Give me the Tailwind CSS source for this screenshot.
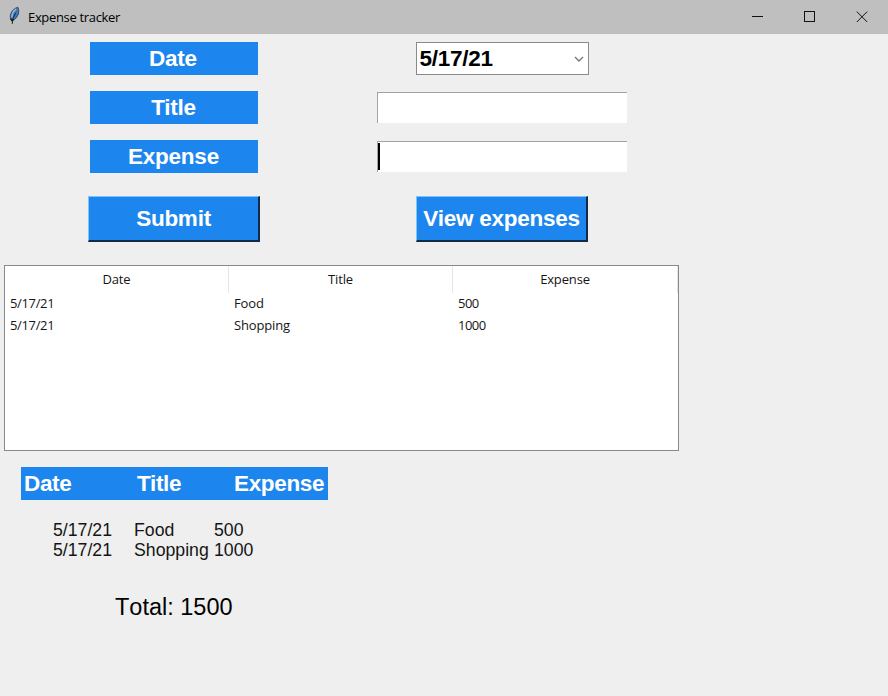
<!DOCTYPE html>
<html lang="en">
<head>
<meta charset="utf-8">
<title>Expense tracker</title>
<script src="https://cdn.jsdelivr.net/npm/@tailwindcss/browser@4"></script>
</head>
<body class="w-[888px] h-[696px] overflow-hidden bg-[#efefef] text-black font-['Liberation_Sans',Arial,sans-serif]">
<header class="flex h-[34px] items-center bg-[#bfbfbf] pl-2">
  <svg class="mb-[2px] h-[20px] w-[13px] shrink-0" viewBox="0 0 13 20">
    <path d="M3.2 14.5C0.8 10.5 3 3.2 9.8 1.2C12.4 6 9.4 12.5 4.8 14.5Z" fill="#3e75b4" stroke="#3c4650" stroke-width="0.9"/>
    <path d="M4 11.5C3.8 8 5.5 5 8.2 3.2" fill="none" stroke="#86bdf0" stroke-width="1.5"/>
    <path d="M7.6 7L5 12.5L4.2 18" fill="none" stroke="#171d24" stroke-width="0.9"/>
    <path d="M2 12.5L4.2 16.3L6.2 13" fill="#222"/>
  </svg>
  <h1 class="mb-px ml-[7px] whitespace-nowrap font-['Open_Sans','Noto_Sans',sans-serif] text-[13px] leading-[18px] tracking-[-0.33px]">Expense tracker</h1>
  <div class="ml-auto flex">
    <svg class="h-[34px] w-[52px]" viewBox="0 0 52 34"><path d="M20 16.5h11" stroke="#111" fill="none"/></svg>
    <svg class="h-[34px] w-[52px]" viewBox="0 0 52 34"><rect x="20.5" y="11.5" width="10" height="10" stroke="#111" fill="none"/></svg>
    <svg class="h-[34px] w-[52px]" viewBox="0 0 52 34"><path d="M20.8 11.6l10.4 10.4M31.2 11.6l-10.4 10.4" stroke="#111" fill="none"/></svg>
  </div>
</header>

<main>
  <form class="grid grid-cols-[348px_308px] text-[22.5px] font-bold leading-[33px] tracking-[-0.25px]">
    <div class="flex h-[49px] justify-center pt-2"><label class="h-[33px] w-[168px] bg-[#1d86ee] pr-[2px] text-center text-white">Date</label></div>
    <div class="flex h-[49px] justify-center pt-2"><div class="flex h-[33px] w-[173px] items-center justify-between border border-[#8a8a8a] bg-white pl-[3px] pr-[4px] leading-[31px]"><span>5/17/21</span><svg class="h-[10px] w-[10px]" viewBox="0 0 10 10"><path d="M1 3l4 4l4-4" fill="none" stroke="#777" stroke-width="1.4"/></svg></div></div>
    <div class="flex h-[49px] justify-center pt-2"><label class="h-[33px] w-[168px] bg-[#1d86ee] pr-px text-center text-white">Title</label></div>
    <div class="flex h-[49px] justify-center pt-[9px]"><div class="mr-px h-[31px] w-[250px] border-l border-t border-[#a2a2a2] bg-white"></div></div>
    <div class="flex h-[56px] justify-center pt-2"><label class="h-[33px] w-[168px] bg-[#1d86ee] pr-px text-center text-white">Expense</label></div>
    <div class="flex h-[56px] justify-center pt-[9px]"><div class="mr-px h-[31px] w-[250px] border-l border-t border-[#a2a2a2] bg-white pt-px"><div class="h-[27px] w-[2px] bg-black"></div></div></div>
    <div class="flex h-[77px] justify-center pt-2"><button type="button" class="h-[46px] w-[172px] border-t border-l border-r-2 border-b-2 border-t-[#83c1fb] border-l-[#83c1fb] border-r-[#142b47] border-b-[#142b47] bg-[#1d86ee] text-white">Submit</button></div>
    <div class="flex h-[77px] justify-center pt-2"><button type="button" class="h-[46px] w-[172px] whitespace-nowrap border-t border-l border-r-2 border-b-2 border-t-[#83c1fb] border-l-[#83c1fb] border-r-[#142b47] border-b-[#142b47] bg-[#1d86ee] text-white">View expenses</button></div>
  </form>

  <section class="ml-1 h-[186px] w-[675px] border border-[#858992] bg-white font-['Open_Sans','Noto_Sans',sans-serif] text-[13px] tracking-[-0.15px] text-[#151515]">
    <div class="grid h-[26px] grid-cols-[224px_224px_225px] text-center leading-[27px]">
      <div class="border-r border-[#e5e5e5]">Date</div><div class="border-r border-[#e5e5e5]">Title</div><div class="border-r border-[#e5e5e5]">Expense</div>
    </div>
    <div class="grid grid-cols-[224px_224px_225px] leading-[22px] [&>div]:pl-[5px]">
      <div class="tracking-[-0.35px]">5/17/21</div><div>Food</div><div class="tracking-[-0.5px]">500</div>
      <div class="tracking-[-0.35px]">5/17/21</div><div>Shopping</div><div class="tracking-[-0.5px]">1000</div>
    </div>
  </section>

  <div class="ml-[21px] mt-[16px] grid h-[33px] w-[307px] grid-cols-[113px_97px_1fr] bg-[#1d86ee] pl-[3px] text-[22.5px] font-bold leading-[33px] tracking-[-0.35px] text-white"><span>Date</span><span>Title</span><span>Expense</span></div>
  <div class="ml-[53px] mt-[20px] grid w-[220px] grid-cols-[81px_80px_1fr] text-[17.7px] leading-5 text-[#151515]">
    <span>5/17/21</span><span>Food</span><span>500</span>
    <span>5/17/21</span><span>Shopping</span><span>1000</span>
  </div>
  <p class="ml-[115px] mt-[33px] whitespace-nowrap text-[23.5px] leading-[28px] [font-kerning:none]">Total: 1500</p>
</main>
</body>
</html>
